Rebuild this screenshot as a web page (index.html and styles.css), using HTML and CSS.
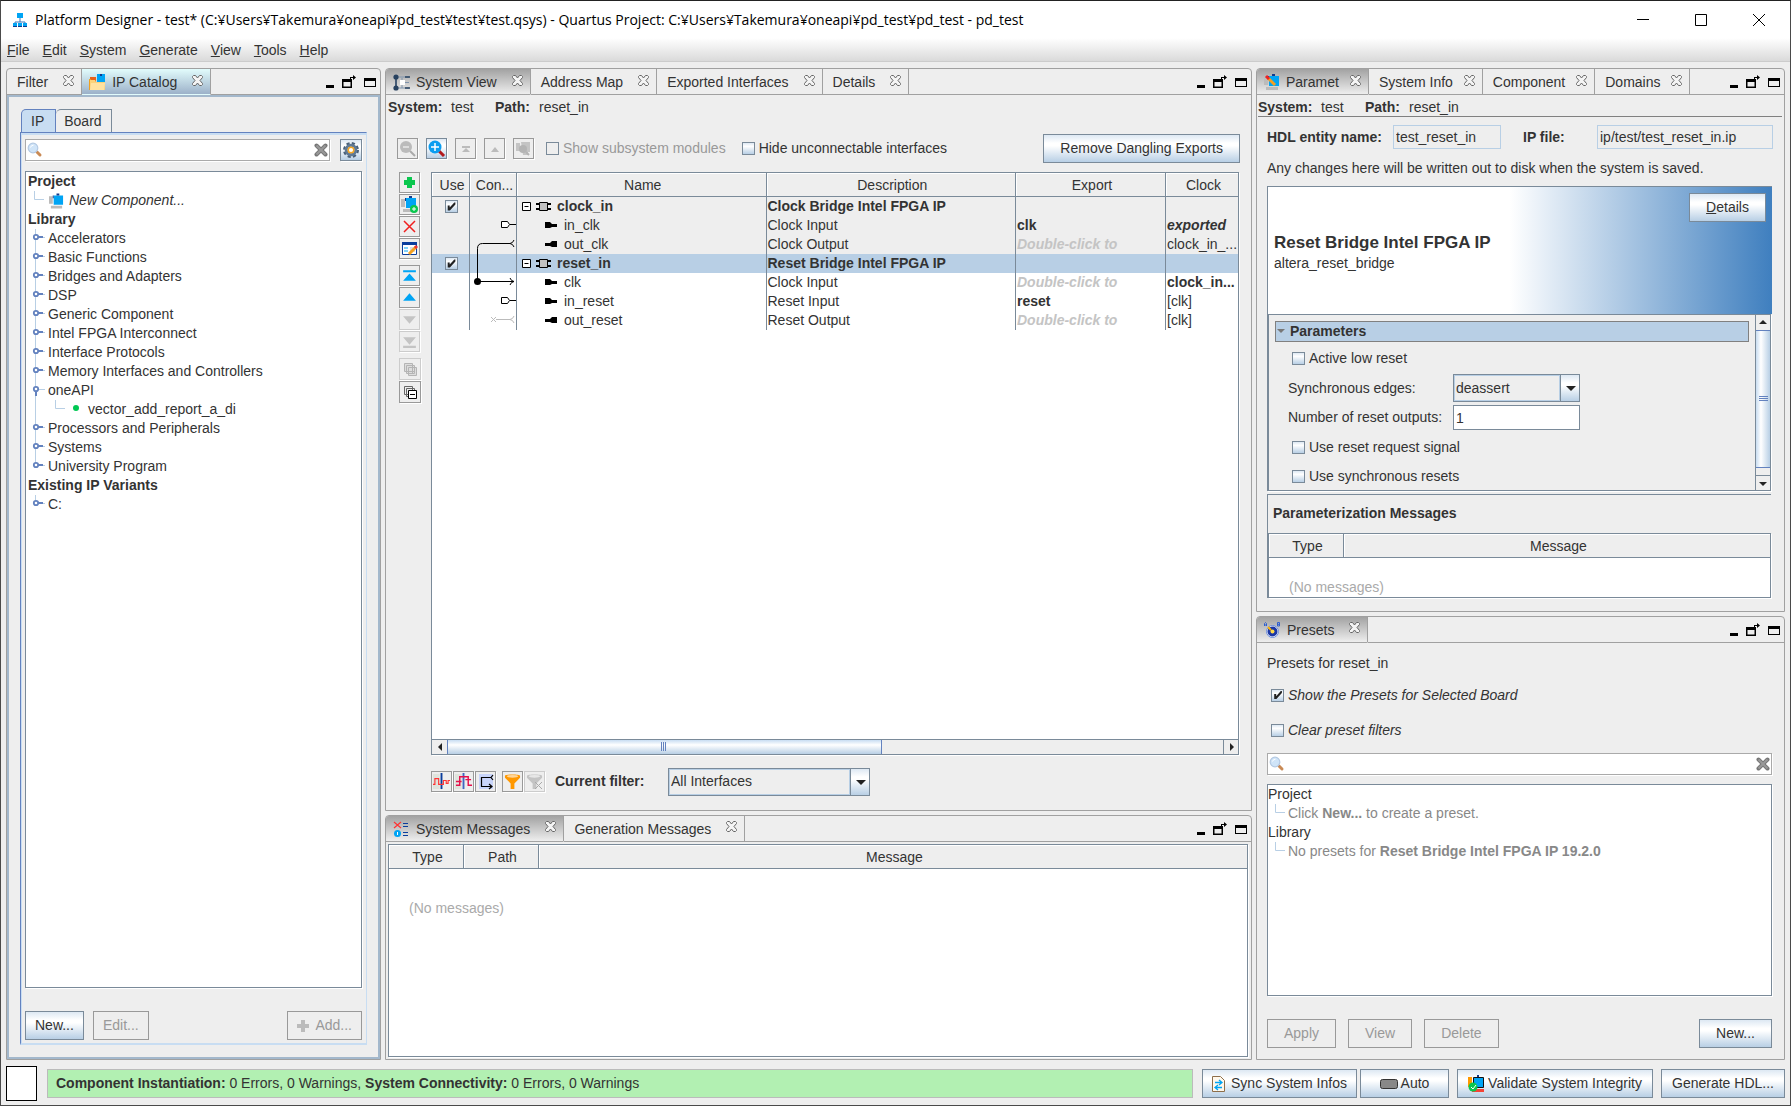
FILE: index.html
```html
<!DOCTYPE html>
<html lang="en">
<head>
  <meta charset="UTF-8" />
  <meta name="viewport" content="width=device-width, initial-scale=1" />
  <title>Platform Designer - test*</title>
  <link rel="stylesheet" href="styles.css">
</head>
<body>

<!-- shared icons -->
<svg class="sprite" aria-hidden="true">
  <symbol id="i-close" viewBox="0 0 11 11">
    <path d="M1.5.5h2l2 2.500 2-2.500h2l1 1v1L8 5.500l2.500 3v1l-1 1h-2l-2-2.500-2 2.500h-2l-1-1v-1L3 5.500l-2.500-3v-1z" fill="#f4f4f4" stroke="#666"/>
  </symbol>
  <symbol id="i-min" viewBox="0 0 8 14"><path d="M0 10h8v3H0z"/></symbol>
  <symbol id="i-float" viewBox="0 0 14 14">
    <path d="M0 4h10v9H0zM1.500 7v4.500h7V7z" fill-rule="evenodd"/>
    <path d="M8 5V2h3V0l3 2.500L11 5V3H9v2z"/>
  </symbol>
  <symbol id="i-max" viewBox="0 0 12 14"><path d="M0 3h12v9H0zM1 6v5h10V6z" fill-rule="evenodd"/></symbol>
  <symbol id="i-search" viewBox="0 0 16 16">
    <path d="M10 10l3 3" stroke="#c98a55" stroke-width="3" stroke-linecap="round"/>
    <circle cx="6" cy="6" r="4.800" fill="#cfe4f8" stroke="#b4c9e2" stroke-width="1.200"/>
    <path d="M3.500 5.500a3 3 0 0 1 3-2.300" stroke="#fff" fill="none"/>
  </symbol>
  <symbol id="i-clear" viewBox="0 0 14 14">
    <path d="M2.500 2.500l9 9M11.500 2.500l-9 9" stroke="#777" stroke-width="4" stroke-linecap="round"/>
    <path d="M2.500 2.500l9 9M11.500 2.500l-9 9" stroke="#999" stroke-width="2"/>
  </symbol>
  <symbol id="i-comp" viewBox="0 0 16 16">
    <path d="M0 3h4v8H0zM2 13h12v3H2z" fill="#bbb"/>
    <path d="M5 2h10v10H5z" fill="#00a4f4"/>
    <path d="M8 0h3v2H8zM4 2h1v3H4z" fill="#123a8c"/>
  </symbol>
  <symbol id="i-knob" viewBox="0 0 14 19">
    <path d="M3.500 0v19M10 8.500h3" stroke="#b8cfe5"/>
    <circle cx="4" cy="8" r="2.200" fill="#fff" stroke="#6382bf" stroke-width="1.800"/>
    <path d="M6 8h5" stroke="#6382bf" stroke-width="2"/>
  </symbol>
  <symbol id="i-knob-last" viewBox="0 0 14 19">
    <path d="M3.500 0v6M10 8.500h3" stroke="#b8cfe5"/>
    <circle cx="4" cy="8" r="2.200" fill="#fff" stroke="#6382bf" stroke-width="1.800"/>
    <path d="M6 8h5" stroke="#6382bf" stroke-width="2"/>
  </symbol>
  <symbol id="i-knob-open" viewBox="0 0 14 19">
    <path d="M3.500 0v19M6 8.500h7" stroke="#b8cfe5"/>
    <circle cx="4" cy="8" r="2.200" fill="#fff" stroke="#6382bf" stroke-width="1.800"/>
    <path d="M4 10v5" stroke="#6382bf" stroke-width="2"/>
  </symbol>
  <symbol id="i-elbow" viewBox="0 0 12 19"><path d="M1.500 0v8.500H11" fill="none" stroke="#b8cfe5"/></symbol>
  <symbol id="i-chip" viewBox="0 0 32 19">
    <path d="M.5 5.500h8v8h-8z" fill="#fff" stroke="#000"/>
    <path d="M2.500 9.500h4" stroke="#000"/>
    <path d="M14 7h15M14 12h15" stroke="#000" stroke-width="2"/>
    <path d="M17.500 5.500h8v8h-8z" fill="#c0c0c0" stroke="#000"/>
  </symbol>
  <symbol id="i-pin-in" viewBox="0 0 12 19"><path d="M0 6h5l2 2h5v3H7l-2 1H0z"/></symbol>
  <symbol id="i-pin-out" viewBox="0 0 12 19"><path d="M12 6H7L5 8H0v3h5l2 1h5z"/></symbol>
  <symbol id="i-hex" viewBox="0 0 47 19">
    <path d="M31.500 5.500h6l2 3-2 3h-6z" fill="#fff" stroke="#000"/>
    <path d="M40 8.500h7" stroke="#000"/>
  </symbol>
  <symbol id="i-wave" viewBox="0 0 18 18">
    <path d="M0 1h7v16H0z" fill="#dfe3dc"/>
    <path d="M9 0v17" stroke="#0a3d9c" stroke-width="2"/>
    <path d="M0 12h2V6h4v6h5V8h3v3h2V8h2" fill="none" stroke="#f33" stroke-width="1.200"/>
  </symbol>
  <symbol id="i-wave2" viewBox="0 0 18 18">
    <path d="M0 1h7v16H0z" fill="#dfe3dc"/>
    <path d="M9 0v17" stroke="#3f66c0" stroke-width="2"/>
    <path d="M1 13h4V4h9v9h4M1 9h6M11 7h6" fill="none" stroke="#e5104c" stroke-width="1.500"/>
  </symbol>
  <symbol id="i-arrow-top" viewBox="0 0 16 16"><path d="M2 3h12v2H2zM8 6l6 7H2z"/></symbol>
  <symbol id="i-arrow-up" viewBox="0 0 16 16"><path d="M8 4l6 7H2z"/></symbol>
  <symbol id="i-arrow-down" viewBox="0 0 16 16"><path d="M8 12L2 5h12z"/></symbol>
  <symbol id="i-arrow-bottom" viewBox="0 0 16 16"><path d="M2 12h12v2H2zM8 11L2 4h12z"/></symbol>
  <symbol id="i-funnel" viewBox="0 0 18 18"><path d="M1 3c0-2 16-2 16 0v2l-6 6v6H7v-6L1 5z"/><ellipse cx="9" cy="3.500" rx="6" ry="1.500" fill="#fff" opacity=".6"/></symbol>
</svg>

<div class="window">
  <header class="titlebar">
    <svg class="app-icon" width="14" height="16" viewBox="0 0 14 16">
      <path d="M7 6v4M2 12v-2h10v2" fill="none" stroke="#3a75b8"/>
      <path d="M4 1h6v5H4z" fill="#00a4f4"/>
      <path d="M0 11h4v4H0zM5 11h4v4H5zM10 11h4v4h-4z" fill="#00a4f4"/>
      <path d="M0 14h4v1H0zM5 14h4v1H5zM10 14h4v1h-4z" fill="#123a8c"/>
    </svg>
    <h1>Platform Designer - test* (C:¥Users¥Takemura¥oneapi¥pd_test¥test¥test.qsys) - Quartus Project: C:¥Users¥Takemura¥oneapi¥pd_test¥pd_test - pd_test</h1>
    <div class="window-buttons">
      <button type="button" aria-label="Minimize"><svg width="14" height="14"><path d="M1 6.500h12" stroke="#000"/></svg></button>
      <button type="button" aria-label="Maximize"><svg width="14" height="14"><path d="M1.500 1.500h11v11h-11z" fill="none" stroke="#000"/></svg></button>
      <button type="button" aria-label="Close"><svg width="14" height="14"><path d="M1 1l12 12M13 1L1 13" stroke="#000"/></svg></button>
    </div>
  </header>

  <nav class="menubar">
    <a href="#"><u>F</u>ile</a>
    <a href="#"><u>E</u>dit</a>
    <a href="#"><u>S</u>ystem</a>
    <a href="#"><u>G</u>enerate</a>
    <a href="#"><u>V</u>iew</a>
    <a href="#"><u>T</u>ools</a>
    <a href="#"><u>H</u>elp</a>
  </nav>

  <main class="workspace">

    <!-- IP Catalog -->
    <section class="panel panel-focus">
      <div class="panel-tabs">
        <div class="tab"><button type="button">Filter</button><button type="button" aria-label="Close Filter"><svg width="11" height="11"><use href="#i-close"/></svg></button></div>
        <div class="tab active with-icon">
          <svg width="17" height="17" viewBox="0 0 17 17">
            <path d="M8 0h8v9H8z" fill="#00a4f4"/><path d="M1 3h6v6H1z" fill="#e8641b"/><path d="M0 5h2v11H0z" fill="#f0a020"/>
            <path d="M1 6h5l1 2h9v8H1z" fill="#fbd27a"/><path d="M2 9h14l-1 7H1z" fill="#ffe2a0"/><path d="M11 0h2v2h-2z" fill="#123a8c"/>
          </svg>
          <button type="button">IP Catalog</button><button type="button" aria-label="Close IP Catalog"><svg width="11" height="11"><use href="#i-close"/></svg></button>
        </div>
        <div class="panel-buttons">
          <button type="button" aria-label="Minimize"><svg width="8" height="14"><use href="#i-min"/></svg></button>
          <button type="button" aria-label="Float"><svg width="14" height="14"><use href="#i-float"/></svg></button>
          <button type="button" aria-label="Maximize"><svg width="12" height="14"><use href="#i-max"/></svg></button>
        </div>
      </div>
      <div class="panel-body catalog">
        <div class="sub-tabs">
          <button type="button" class="sub-tab active">IP</button>
          <button type="button" class="sub-tab">Board</button>
        </div>
        <div class="sub-pane">
          <div class="search-row">
            <div class="search">
              <svg width="16" height="16"><use href="#i-search"/></svg>
              <input type="text" aria-label="Search IP catalog">
              <button type="button" aria-label="Clear search"><svg width="14" height="14"><use href="#i-clear"/></svg></button>
            </div>
            <button type="button" class="icon-button hot" aria-label="Catalog settings">
              <svg width="18" height="18" viewBox="0 0 18 18">
                <circle cx="9" cy="9" r="6.500" fill="none" stroke="#4a6078" stroke-width="3" stroke-dasharray="3 2.100"/>
                <circle cx="9" cy="9" r="4.800" fill="none" stroke="#5f7a96" stroke-width="3"/>
                <circle cx="9" cy="9" r="2.800" fill="#fff" stroke="#f5a623" stroke-width="1.500"/>
              </svg>
            </button>
          </div>
          <ul class="tree catalog-tree">
            <li><b>Project</b></li>
            <li class="child"><svg width="12" height="19"><use href="#i-elbow"/></svg><svg class="tree-icon" width="15" height="16"><use href="#i-comp"/></svg><i>New Component...</i></li>
            <li><b>Library</b></li>
            <li class="node"><svg width="14" height="19"><use href="#i-knob"/></svg>Accelerators</li>
            <li class="node"><svg width="14" height="19"><use href="#i-knob"/></svg>Basic Functions</li>
            <li class="node"><svg width="14" height="19"><use href="#i-knob"/></svg>Bridges and Adapters</li>
            <li class="node"><svg width="14" height="19"><use href="#i-knob"/></svg>DSP</li>
            <li class="node"><svg width="14" height="19"><use href="#i-knob"/></svg>Generic Component</li>
            <li class="node"><svg width="14" height="19"><use href="#i-knob"/></svg>Intel FPGA Interconnect</li>
            <li class="node"><svg width="14" height="19"><use href="#i-knob"/></svg>Interface Protocols</li>
            <li class="node"><svg width="14" height="19"><use href="#i-knob"/></svg>Memory Interfaces and Controllers</li>
            <li class="node"><svg width="14" height="19"><use href="#i-knob-open"/></svg>oneAPI</li>
            <li class="node">
              <svg width="54" height="19"><path d="M3.500 0v19M23.500 0v8.500H33" fill="none" stroke="#b8cfe5"/><circle cx="44" cy="8" r="3" fill="#00c853"/></svg>vector_add_report_a_di
            </li>
            <li class="node"><svg width="14" height="19"><use href="#i-knob"/></svg>Processors and Peripherals</li>
            <li class="node"><svg width="14" height="19"><use href="#i-knob"/></svg>Systems</li>
            <li class="node"><svg width="14" height="19"><use href="#i-knob-last"/></svg>University Program</li>
            <li><b>Existing IP Variants</b></li>
            <li class="node"><svg width="14" height="19"><use href="#i-knob-last"/></svg>C:</li>
          </ul>
          <div class="button-row">
            <button type="button" class="btn">New...</button>
            <button type="button" class="btn" disabled>Edit...</button>
            <button type="button" class="btn push" disabled><svg width="12" height="12"><path d="M4 0h4v4h4v4H8v4H4V8H0V4h4z" fill="#bbb"/></svg>Add...</button>
          </div>
        </div>
      </div>
    </section>

    <div class="stack middle">
      <!-- System View -->
      <section class="panel">
        <div class="panel-tabs">
          <div class="tab active with-icon">
            <svg width="17" height="17" viewBox="0 0 17 17">
              <path d="M3 3v11M3 3h13M3 14h13M9 4v10M9 8.500h7" fill="none" stroke="#7f93ab"/>
              <path d="M12 3h5M12 14h5M3 3v11" stroke="#27415f" stroke-width="1.500"/>
              <circle cx="3" cy="3" r="2.600" fill="#27415f"/><circle cx="3" cy="14" r="2.600" fill="#27415f"/><path d="M7 6h5v5H7z" fill="#fff"/>
            </svg>
            <button type="button">System View</button><button type="button" aria-label="Close System View"><svg width="11" height="11"><use href="#i-close"/></svg></button>
          </div>
          <div class="tab"><button type="button">Address Map</button><button type="button" aria-label="Close Address Map"><svg width="11" height="11"><use href="#i-close"/></svg></button></div>
          <div class="tab"><button type="button">Exported Interfaces</button><button type="button" aria-label="Close Exported Interfaces"><svg width="11" height="11"><use href="#i-close"/></svg></button></div>
          <div class="tab"><button type="button">Details</button><button type="button" aria-label="Close Details"><svg width="11" height="11"><use href="#i-close"/></svg></button></div>
          <div class="panel-buttons">
            <button type="button" aria-label="Minimize"><svg width="8" height="14"><use href="#i-min"/></svg></button>
            <button type="button" aria-label="Float"><svg width="14" height="14"><use href="#i-float"/></svg></button>
            <button type="button" aria-label="Maximize"><svg width="12" height="14"><use href="#i-max"/></svg></button>
          </div>
        </div>
        <div class="panel-body">
          <p class="path-line"><b>System:</b><span>test</span><b>Path:</b><span>reset_in</span></p>
          <div class="toolbar">
            <button type="button" class="icon-button" aria-label="Zoom out" disabled><svg width="18" height="18"><path d="M11 11l5 5" stroke="#aaa" stroke-width="2"/><circle cx="7" cy="7" r="6" fill="#bbb"/><path d="M4 7h6" stroke="#ddd" stroke-width="2"/></svg></button>
            <button type="button" class="icon-button hot" aria-label="Zoom in"><svg width="18" height="18"><path d="M11 11l5 5" stroke="#b3191c" stroke-width="3"/><circle cx="7" cy="7" r="6.500" fill="#0a9df0"/><path d="M3 7h8M7 3v8" stroke="#fff" stroke-width="1.500"/></svg></button>
            <button type="button" class="icon-button" aria-label="Top level" disabled><svg width="18" height="18"><path d="M5 6h8v2H5zM9 8l4 4H5z" fill="#bbb"/></svg></button>
            <button type="button" class="icon-button" aria-label="Up one level" disabled><svg width="18" height="18"><path d="M9 7l4 5H5z" fill="#bbb"/></svg></button>
            <button type="button" class="icon-button" aria-label="Drill into" disabled><svg width="18" height="18"><path d="M1 3h4v8H1zM6 2h9v10h-2v3H8z" fill="#c4c4c4"/><circle cx="8" cy="9" r="4" fill="#b4b4b4"/><path d="M11 12l3 3" stroke="#b4b4b4" stroke-width="2"/></svg></button>
            <label class="check dim"><input type="checkbox" disabled>Show subsystem modules</label>
            <label class="check"><input type="checkbox">Hide unconnectable interfaces</label>
            <button type="button" class="btn push">Remove Dangling Exports</button>
          </div>
          <div class="system-area">
            <div class="side-tools">
              <button type="button" class="icon-button" aria-label="Add"><svg width="17" height="17"><path d="M6 3h5v3h3v5h-3v3H6v-3H3V6h3z" fill="#0ac74e"/></svg></button>
              <button type="button" class="icon-button" aria-label="Add component"><svg width="17" height="17"><use href="#i-comp" width="16" height="16"/><circle cx="13" cy="13" r="4" fill="#0ac74e"/><path d="M11 13h4M13 11v4" stroke="#fff"/></svg></button>
              <button type="button" class="icon-button" aria-label="Remove"><svg width="17" height="17"><path d="M3 3l11 11M14 3L3 14" stroke="#f02020" stroke-width="1.500"/></svg></button>
              <button type="button" class="icon-button" aria-label="Edit"><svg width="17" height="17"><path d="M1.500 2.500h14v12h-14z" fill="#fff" stroke="#0a3d9c"/><path d="M1 2h15v3H1z" fill="#0a3d9c"/><path d="M3 8h4M3 11h4" stroke="#00a4f4"/><path d="M9 7h5v5H9z" fill="#ddd"/><path d="M8 14l7-7" stroke="#f5a020" stroke-width="3"/><path d="M14 8l2-2" stroke="#e33" stroke-width="3"/></svg></button>
              <button type="button" class="icon-button first" aria-label="Move to top"><svg width="17" height="17" fill="#00a4f4"><use href="#i-arrow-top"/></svg></button>
              <button type="button" class="icon-button" aria-label="Move up"><svg width="17" height="17" fill="#00a4f4"><use href="#i-arrow-up"/></svg></button>
              <button type="button" class="icon-button" aria-label="Move down" disabled><svg width="17" height="17" fill="#c4c4c4"><use href="#i-arrow-down"/></svg></button>
              <button type="button" class="icon-button" aria-label="Move to bottom" disabled><svg width="17" height="17" fill="#c4c4c4"><use href="#i-arrow-bottom"/></svg></button>
              <button type="button" class="icon-button large first" aria-label="Expand all" disabled><svg width="17" height="17" fill="#ddd" stroke="#b4b4b4"><path d="M2.500 2.500h8v8h-8zM4.500 4.500h8v8h-8zM6.500 6.500h8v8h-8zM8 10.500h5M10.500 8v5"/></svg></button>
              <button type="button" class="icon-button large" aria-label="Collapse all"><svg width="17" height="17" fill="#eee" stroke="#666"><path d="M2.500 2.500h8v8h-8zM4.500 4.500h8v8h-8z"/><path d="M6.500 6.500h8v8h-8zM8 10.500h5" fill="#fff" stroke="#000"/></svg></button>
            </div>
            <div class="table-frame">
              <table class="grid-table system-table">
                <colgroup><col class="c-use"><col class="c-con"><col class="c-name"><col class="c-desc"><col class="c-exp"><col class="c-clk"></colgroup>
                <thead>
                  <tr><th>Use</th><th>Con...</th><th>Name</th><th>Description</th><th>Export</th><th>Clock</th></tr>
                </thead>
                <tbody>
                  <tr class="shade strong">
                    <td><input type="checkbox" aria-label="Use clock_in" checked></td>
                    <td></td>
                    <td class="module"><svg width="32" height="19"><use href="#i-chip"/></svg>clock_in</td>
                    <td>Clock Bridge Intel FPGA IP</td><td></td><td></td>
                  </tr>
                  <tr class="shade">
                    <td></td>
                    <td><svg width="47" height="19"><use href="#i-hex"/></svg></td>
                    <td class="port"><svg width="12" height="19"><use href="#i-pin-in"/></svg>in_clk</td>
                    <td>Clock Input</td><td><b>clk</b></td><td><b><i>exported</i></b></td>
                  </tr>
                  <tr class="shade">
                    <td></td>
                    <td><svg width="47" height="19" fill="none" stroke="#000"><path d="M7.500 19v-5.500q0-5 5-5H40M44 5q-1 3-4 3.500 3 .5 4 3.500"/></svg></td>
                    <td class="port"><svg width="12" height="19"><use href="#i-pin-out"/></svg>out_clk</td>
                    <td>Clock Output</td><td class="hint">Double-click to</td><td>clock_in_...</td>
                  </tr>
                  <tr class="selected strong">
                    <td><input type="checkbox" aria-label="Use reset_in" checked></td>
                    <td><svg width="47" height="19"><path d="M7.500 0v19" stroke="#000"/></svg></td>
                    <td class="module"><svg width="32" height="19"><use href="#i-chip"/></svg>reset_in</td>
                    <td>Reset Bridge Intel FPGA IP</td><td></td><td></td>
                  </tr>
                  <tr>
                    <td></td>
                    <td><svg width="47" height="19"><path d="M7.500 0v8.500H44M40 5q1 3 4 3.500-3 .5-4 3.500" fill="none" stroke="#000"/><circle cx="7.500" cy="8.500" r="3.500"/></svg></td>
                    <td class="port"><svg width="12" height="19"><use href="#i-pin-in"/></svg>clk</td>
                    <td>Clock Input</td><td class="hint">Double-click to</td><td><b>clock_in...</b></td>
                  </tr>
                  <tr>
                    <td></td>
                    <td><svg width="47" height="19"><use href="#i-hex"/></svg></td>
                    <td class="port"><svg width="12" height="19"><use href="#i-pin-in"/></svg>in_reset</td>
                    <td>Reset Input</td><td><b>reset</b></td><td>[clk]</td>
                  </tr>
                  <tr>
                    <td></td>
                    <td><svg width="47" height="19" fill="none" stroke="#bbb"><path d="M21 6l5 5M26 6l-5 5M26 8.500h14M44 5q-1 3-4 3.500 3 .5 4 3.500"/></svg></td>
                    <td class="port"><svg width="12" height="19"><use href="#i-pin-out"/></svg>out_reset</td>
                    <td>Reset Output</td><td class="hint">Double-click to</td><td>[clk]</td>
                  </tr>
                </tbody>
              </table>
              <div class="scrollbar horizontal">
                <svg class="arrow" width="15" height="14"><path d="M10 3v8L6 7z" fill="#222"/></svg>
                <div class="track"><div class="thumb"><svg width="6" height="9"><path d="M.5 0v9M2.500 0v9M4.500 0v9" stroke="#6382bf"/></svg></div></div>
                <svg class="arrow" width="15" height="14"><path d="M6 3v8l4-4z" fill="#222"/></svg>
              </div>
            </div>
          </div>
          <div class="filter-bar">
            <div class="filter-tools">
              <button type="button" class="icon-button" aria-label="Show clock domains"><svg width="17" height="17"><use href="#i-wave"/></svg></button>
              <button type="button" class="icon-button" aria-label="Show reset domains"><svg width="17" height="17"><use href="#i-wave2"/></svg></button>
              <button type="button" class="icon-button" aria-label="Show connections"><svg width="17" height="17"><path d="M2 1h14v15H2z" fill="#c8d4fa"/><path d="M14 4.500H4.500v9H15M16 2l-2 2.500L16 7M12 11l3 2.500-3 2.500" fill="none" stroke="#000" stroke-width="1.200"/></svg></button>
              <button type="button" class="icon-button gap" aria-label="Filters"><svg width="17" height="17" fill="#ff9800"><use href="#i-funnel"/></svg></button>
              <button type="button" class="icon-button" aria-label="Clear filters" disabled><svg width="17" height="17" fill="#c4c4c4"><use href="#i-funnel"/><path d="M9 9l7 7M16 9l-7 7" stroke="#aaa"/></svg></button>
            </div>
            <label for="currentFilter"><b>Current filter:</b></label>
            <div class="combo wide">
              <select id="currentFilter"><option>All Interfaces</option></select>
              <svg width="19" height="26"><path d="M5 11h10l-5 5z" fill="#222"/></svg>
            </div>
          </div>
        </div>
      </section>

      <!-- Messages -->
      <section class="panel">
        <div class="panel-tabs">
          <div class="tab active with-icon">
            <svg width="17" height="17" viewBox="0 0 17 17"><path d="M1 1l7 6M8 1L1 7" stroke="#f33" stroke-width="1.200"/><path d="M10 2.500h5M10 5.500h5M10 11.500h5M10 14.500h5" stroke="#0a3d9c"/><circle cx="4.500" cy="12.500" r="3.500" fill="#00a4f4"/><path d="M4.500 11v3" stroke="#fff"/></svg>
            <button type="button">System Messages</button><button type="button" aria-label="Close System Messages"><svg width="11" height="11"><use href="#i-close"/></svg></button>
          </div>
          <div class="tab"><button type="button">Generation Messages</button><button type="button" aria-label="Close Generation Messages"><svg width="11" height="11"><use href="#i-close"/></svg></button></div>
          <div class="panel-buttons">
            <button type="button" aria-label="Minimize"><svg width="8" height="14"><use href="#i-min"/></svg></button>
            <button type="button" aria-label="Float"><svg width="14" height="14"><use href="#i-float"/></svg></button>
            <button type="button" aria-label="Maximize"><svg width="12" height="14"><use href="#i-max"/></svg></button>
          </div>
        </div>
        <div class="panel-body messages-body">
          <div class="table-frame">
            <table class="grid-table">
              <colgroup><col class="c-type"><col class="c-path"><col></colgroup>
              <thead><tr><th>Type</th><th>Path</th><th>Message</th></tr></thead>
              <tbody><tr><td colspan="3" class="empty tall">(No messages)</td></tr></tbody>
            </table>
          </div>
        </div>
      </section>
    </div>

    <div class="stack right">
      <!-- Parameters -->
      <section class="panel">
        <div class="panel-tabs tight">
          <div class="tab active with-icon">
            <svg width="17" height="17" viewBox="0 0 17 17"><use href="#i-comp" width="16" height="16"/><path d="M4 4l7 7" stroke="#f5a020" stroke-width="3"/><path d="M2 2l3 3" stroke="#e22" stroke-width="3"/></svg>
            <button type="button">Paramet</button><button type="button" aria-label="Close Parameters"><svg width="11" height="11"><use href="#i-close"/></svg></button>
          </div>
          <div class="tab"><button type="button">System Info</button><button type="button" aria-label="Close System Info"><svg width="11" height="11"><use href="#i-close"/></svg></button></div>
          <div class="tab"><button type="button">Component</button><button type="button" aria-label="Close Component"><svg width="11" height="11"><use href="#i-close"/></svg></button></div>
          <div class="tab"><button type="button">Domains</button><button type="button" aria-label="Close Domains"><svg width="11" height="11"><use href="#i-close"/></svg></button></div>
          <div class="panel-buttons">
            <button type="button" aria-label="Minimize"><svg width="8" height="14"><use href="#i-min"/></svg></button>
            <button type="button" aria-label="Float"><svg width="14" height="14"><use href="#i-float"/></svg></button>
            <button type="button" aria-label="Maximize"><svg width="12" height="14"><use href="#i-max"/></svg></button>
          </div>
        </div>
        <div class="panel-body">
          <p class="path-line ruled"><b>System:</b><span>test</span><b>Path:</b><span>reset_in</span></p>
          <div class="entity-row">
            <label for="hdlName"><b>HDL entity name:</b></label>
            <input type="text" id="hdlName" value="test_reset_in" readonly>
            <label for="ipFile"><b>IP file:</b></label>
            <input type="text" id="ipFile" value="ip/test/test_reset_in.ip" readonly>
          </div>
          <p class="note">Any changes here will be written out to disk when the system is saved.</p>
          <div class="banner">
            <button type="button" class="btn"><span><u>D</u>etails</span></button>
            <h2>Reset Bridge Intel FPGA IP</h2>
            <p>altera_reset_bridge</p>
          </div>
          <div class="param-scroll">
            <div class="params">
              <h3><svg width="8" height="5"><path d="M0 0h8L4 4z" fill="#777"/></svg>Parameters</h3>
              <label class="check"><input type="checkbox">Active low reset</label>
              <div class="field">
                <label for="syncEdges">Synchronous edges:</label>
                <div class="combo">
                  <select id="syncEdges"><option>deassert</option></select>
                  <svg width="19" height="26"><path d="M5 11h10l-5 5z" fill="#222"/></svg>
                </div>
              </div>
              <div class="field">
                <label for="resetOutputs">Number of reset outputs:</label>
                <input type="text" id="resetOutputs" value="1">
              </div>
              <label class="check"><input type="checkbox">Use reset request signal</label>
              <label class="check"><input type="checkbox">Use synchronous resets</label>
            </div>
            <div class="scrollbar vertical">
              <svg class="arrow" width="14" height="15"><path d="M3 9h8L7 5z" fill="#222"/></svg>
              <div class="track"><div class="thumb"><svg width="9" height="6"><path d="M0 .5h9M0 2.500h9M0 4.500h9" stroke="#6382bf"/></svg></div></div>
              <svg class="arrow" width="14" height="15"><path d="M3 6h8l-4 4z" fill="#222"/></svg>
            </div>
          </div>
          <div class="param-messages">
            <h3>Parameterization Messages</h3>
            <div class="table-frame">
              <table class="grid-table">
                <colgroup><col class="c-type"><col></colgroup>
                <thead><tr><th>Type</th><th>Message</th></tr></thead>
                <tbody><tr><td colspan="2" class="empty">(No messages)</td></tr></tbody>
              </table>
            </div>
          </div>
        </div>
      </section>

      <!-- Presets -->
      <section class="panel">
        <div class="panel-tabs">
          <div class="tab active with-icon">
            <svg width="17" height="17" viewBox="0 0 17 17"><path d="M.5 4V1.500l1-1 1 1V4M.5 3h2M13.500.5v3.500h2v-3.500zM13.500 2.300h2" fill="none" stroke="#2f5fd0"/><circle cx="8.500" cy="9.500" r="6" fill="#fff" stroke="#6d8fdc"/><circle cx="8.500" cy="9.500" r="5" fill="#1b37a5"/><circle cx="8.500" cy="9.500" r="2" fill="#ffd94a"/><path d="M4 5l3 3" stroke="#ffb300" stroke-width="2"/></svg>
            <button type="button">Presets</button><button type="button" aria-label="Close Presets"><svg width="11" height="11"><use href="#i-close"/></svg></button>
          </div>
          <div class="panel-buttons">
            <button type="button" aria-label="Minimize"><svg width="8" height="14"><use href="#i-min"/></svg></button>
            <button type="button" aria-label="Float"><svg width="14" height="14"><use href="#i-float"/></svg></button>
            <button type="button" aria-label="Maximize"><svg width="12" height="14"><use href="#i-max"/></svg></button>
          </div>
        </div>
        <div class="panel-body presets">
          <p>Presets for reset_in</p>
          <label class="check"><input type="checkbox" checked><i>Show the Presets for Selected Board</i></label>
          <label class="check"><input type="checkbox"><i>Clear preset filters</i></label>
          <div class="search">
            <svg width="16" height="16"><use href="#i-search"/></svg>
            <input type="text" aria-label="Search presets">
            <button type="button" aria-label="Clear search"><svg width="14" height="14"><use href="#i-clear"/></svg></button>
          </div>
          <ul class="tree">
            <li>Project</li>
            <li class="node muted"><svg width="12" height="19"><use href="#i-elbow"/></svg><span>Click <b>New...</b> to create a preset.</span></li>
            <li>Library</li>
            <li class="node muted"><svg width="12" height="19"><use href="#i-elbow"/></svg><span>No presets for <b>Reset Bridge Intel FPGA IP 19.2.0</b></span></li>
          </ul>
          <div class="button-row">
            <button type="button" class="btn" disabled>Apply</button>
            <button type="button" class="btn" disabled>View</button>
            <button type="button" class="btn" disabled>Delete</button>
            <button type="button" class="btn push">New...</button>
          </div>
        </div>
      </section>
    </div>
  </main>

  <footer class="statusbar">
    <div class="status-box"></div>
    <p class="status-text"><b>Component Instantiation:</b> 0 Errors, 0 Warnings, <b>System Connectivity:</b> 0 Errors, 0 Warnings</p>
    <button type="button" class="btn sync">
      <svg width="13" height="16"><path d="M.5.500h8l4 4v11H.5z" fill="#fff8ec" stroke="#8d6e4a"/><path d="M3 6.500h6M7 4l3 2.500L7 9M10 11.500H4M6 9l-3 2.500L6 14" fill="none" stroke="#00a4f4" stroke-width="1.300"/></svg>
      Sync System Infos
    </button>
    <button type="button" class="btn auto"><svg width="18" height="10"><rect x=".5" y=".5" width="17" height="9" rx="2" fill="#888" stroke="#333"/></svg>Auto</button>
    <button type="button" class="btn validate">
      <svg width="17" height="17"><path d="M0 2h4v10H0z" fill="#f90"/><path d="M4 14h12v3H4z" fill="#f44336"/><path d="M5.500 2.500h10v10h-10z" fill="#00a4f4" stroke="#111"/><path d="M9 0h2v2H9z" fill="#123a8c"/><circle cx="5" cy="12" r="4.500" fill="#0ac74e"/><path d="M3 12l2 2 3-4" fill="none" stroke="#fff"/></svg>
      Validate System Integrity
    </button>
    <button type="button" class="btn generate">Generate HDL...</button>
  </footer>
</div>

</body>
</html>
```

FILE: styles.css
```css
* {
  box-sizing: border-box;
}

body {
  margin: 0;
  background-color: #eee;
  font-family: "Liberation Sans", Arial, sans-serif;
  font-size: 14px;
  line-height: 19px;
  color: #333;
}

h1, h2, h3, p, ul {
  margin: 0;
  padding: 0;
}

button, input, select {
  font: inherit;
  color: inherit;
}

button {
  padding: 0;
  border: none;
  background: none;
}

svg {
  display: block;
  flex-shrink: 0;
}

.sprite {
  display: none;
}

.window {
  display: flex;
  flex-direction: column;
  height: 100vh;
  border: 1px solid #4a4a4a;
  border-top-color: #222;
  overflow: hidden;
}

/* title bar and menu */
.titlebar {
  display: flex;
  align-items: center;
  gap: 8px;
  height: 37px;
  padding-left: 12px;
  background-color: #fff;
}

.titlebar h1 {
  flex: 1;
  font-family: "Open Sans", "Noto Sans", sans-serif;
  font-size: 14px;
  font-weight: 400;
  color: #000;
  white-space: nowrap;
}

.window-buttons {
  display: flex;
  gap: 44px;
  padding-right: 24px;
}

.menubar {
  display: flex;
  gap: 13px;
  height: 24px;
  padding: 3px 6px 1px;
  background: linear-gradient(#fff, #dadada);
  border-bottom: 1px solid #ccc;
}

.menubar a {
  color: #333;
  text-decoration: none;
}

/* panels */
.workspace {
  flex: 1;
  min-height: 0;
  display: grid;
  grid-template-columns: 375fr 867fr 529fr;
  gap: 4px;
  padding: 6px 5px;
}

.stack {
  display: grid;
  gap: 4px;
  min-width: 0;
  min-height: 0;
}

.stack.middle {
  grid-template-rows: 742fr 245fr;
}

.stack.right {
  grid-template-rows: 543fr 444fr;
}

.panel {
  display: flex;
  flex-direction: column;
  min-width: 0;
  min-height: 0;
  border: 1px solid #a0a0a0;
  border-radius: 4px 4px 0 0;
  overflow: hidden;
}

.panel-tabs {
  display: flex;
  height: 26px;
  flex-shrink: 0;
}

.tab {
  display: flex;
  align-items: center;
  gap: 15px;
  padding: 2px 7px 0 10px;
  border-right: 1px solid #a0a0a0;
  border-bottom: 1px solid #a0a0a0;
  white-space: nowrap;
}

.tight .tab {
  gap: 11px;
}

.tab > button:last-child {
  padding-bottom: 5px;
}

.tab.with-icon {
  padding-left: 7px;
}

.tab.with-icon > svg {
  margin-right: -9px;
}

.tight .tab.with-icon > svg {
  margin-right: -6px;
}

.tab.active {
  background: linear-gradient(#a2a2a2, #eee);
  border-bottom-color: transparent;
}

.panel-buttons {
  flex: 1;
  display: flex;
  justify-content: flex-end;
  align-items: center;
  gap: 8px;
  padding: 1px 4px 0 0;
  border-bottom: 1px solid #a0a0a0;
}

.panel-body {
  flex: 1;
  min-height: 0;
  display: flex;
  flex-direction: column;
}

.panel-focus .panel-body {
  border: 2px solid #a3b8cc;
}

.panel-focus .tab.active {
  background: linear-gradient(#e2fcfc, #9cb1c9);
}

/* buttons, checks and fields */
.btn {
  display: flex;
  align-items: center;
  justify-content: center;
  gap: 6px;
  height: 29px;
  padding: 0 9px;
  border: 1px solid #7a8a99;
  background: linear-gradient(#dde8f3, #fff 30%, #fff 40%, #b8cfe5);
  white-space: nowrap;
}

.btn:disabled {
  border-color: #999;
  background: none;
  color: #999;
}

.push {
  margin-left: auto;
}

.icon-button {
  display: flex;
  align-items: center;
  justify-content: center;
  width: 21px;
  height: 21px;
  border: 1px solid #999;
  box-shadow: 1px 1px #fff;
}

.icon-button.large {
  width: 22px;
  height: 22px;
}

.icon-button.hot {
  border-color: #7a8a99;
  background: linear-gradient(#dde8f3, #fff 30%, #fff 40%, #b8cfe5);
}

.side-tools .icon-button:disabled,
.filter-tools .icon-button:disabled {
  border-color: #ccc;
}

.check {
  display: flex;
  align-items: center;
  gap: 4px;
  white-space: nowrap;
}

.dim {
  color: #999;
}

input[type="checkbox"] {
  appearance: none;
  display: block;
  width: 13px;
  height: 13px;
  margin: 0;
  border: 1px solid #7a8a99;
  background: linear-gradient(#dde8f3, #fff 30%, #b8cfe5);
}

input[type="checkbox"]:disabled {
  background: none;
}

input[type="checkbox"]:checked::after {
  content: "";
  display: block;
  height: 11px;
  background-color: #222;
  clip-path: polygon(20% 40%, 38% 40%, 38% 60%, 80% 14%, 90% 14%, 90% 32%, 40% 86%, 20% 86%);
}

input[type="text"] {
  height: 24px;
  min-width: 0;
  padding: 0 2px;
  border: 1px solid #b8cfe5;
  border-radius: 0;
  background: none;
}

.combo {
  display: flex;
  width: 127px;
  height: 28px;
  border: 1px solid #7a8a99;
}

.combo.wide {
  width: 202px;
}

.combo select {
  appearance: none;
  flex: 1;
  min-width: 0;
  padding: 0 1px;
  border: 1px solid #b8cfe5;
  border-radius: 0;
  background: none;
}

.combo svg {
  border-left: 1px solid #7a8a99;
  background: linear-gradient(#dde8f3, #fff 30%, #fff 40%, #b8cfe5);
}

.search {
  display: flex;
  align-items: center;
  height: 22px;
  padding: 0 1px;
  border: 1px solid #aaa;
  background-color: #fff;
  box-shadow: 1px 1px #fff;
}

.search input[type="text"] {
  flex: 1;
  height: 20px;
  border: none;
}

.button-row {
  display: flex;
}

/* trees */
.tree {
  list-style: none;
  flex: 1;
  min-height: 0;
  overflow: hidden;
  border: 1px solid #7a8a99;
  background-color: #fff;
  box-shadow: 1px 1px #fff;
}

.tree li {
  display: flex;
  align-items: center;
  height: 19px;
  white-space: nowrap;
}

.tree .node {
  gap: 2px;
  padding-left: 6px;
}

.tree .child {
  gap: 4px;
  padding-left: 7px;
}

.tree-icon {
  margin-right: 1px;
}

.catalog-tree li {
  padding-left: 2px;
}

.muted {
  color: #888;
}

/* IP catalog */
.panel-body.catalog {
  padding: 12px 11px;
}

.sub-tabs {
  display: flex;
  margin-left: 1px;
}

.sub-tab {
  height: 23px;
  padding: 0 9px 0 8px;
  border: 1px solid #7a8a99;
  border-left: none;
  border-bottom: none;
  border-top-left-radius: 5px;
}

.sub-tab.active {
  padding: 0 11px 0 9px;
  border: 1px solid #6382bf;
  border-bottom: none;
  background-color: #c8ddf2;
}

.sub-pane {
  flex: 1;
  min-height: 0;
  display: flex;
  flex-direction: column;
  padding: 4px 4px 3px;
  border: 1px solid #6382bf;
  border-right-color: #c8ddf2;
  border-bottom: 2px solid #c8ddf2;
  box-shadow: inset 1px 2px #c8ddf2;
}

.search-row {
  display: flex;
  gap: 10px;
  margin: 2px 0 10px;
}

.search-row .search {
  flex: 1;
}

.search-row .icon-button {
  width: 22px;
  height: 22px;
}

.catalog .button-row {
  gap: 9px;
  margin-top: 23px;
}

/* system view */
.path-line {
  display: flex;
  padding: 3px 2px 0;
}

.path-line b:first-child {
  width: 63px;
}

.path-line span {
  width: 44px;
}

.path-line b {
  width: 44px;
}

.path-line span:last-child {
  width: auto;
}

.path-line.ruled {
  height: 22px;
  margin: 0 2px 0 1px;
  padding: 3px 0 0;
  border-bottom: 1px solid #808080;
}

.toolbar {
  display: flex;
  align-items: center;
  gap: 8px;
  margin: 17px 11px 9px 11px;
}

.toolbar .check:nth-of-type(1) {
  margin: 0 8px 0 4px;
}

.toolbar .btn {
  padding: 0 16px;
}

.system-area {
  flex: 1;
  min-height: 0;
  display: flex;
  gap: 11px;
  padding: 0 12px 0 13px;
}

.side-tools {
  display: flex;
  flex-direction: column;
  gap: 1px;
  width: 21px;
}

.side-tools .first {
  margin-top: 5px;
}

.table-frame {
  flex: 1;
  min-width: 0;
  min-height: 0;
  display: flex;
  flex-direction: column;
  border: 1px solid #7a8a99;
  background-color: #fff;
  box-shadow: 1px 1px #fff;
}

.grid-table {
  width: 100%;
  table-layout: fixed;
  border-collapse: separate;
  border-spacing: 0;
}

.grid-table th {
  height: 24px;
  padding: 2px 0 0 3px;
  border-right: 1px solid #7a8a99;
  border-bottom: 1px solid #7a8a99;
  background-color: #eee;
  box-shadow: inset 1px 1px #fff;
  font-weight: 400;
}

.system-table td {
  height: 19px;
  padding: 0 0 0 1px;
  border-right: 1px solid #7a8a99;
  white-space: nowrap;
  overflow: hidden;
}

.grid-table th:last-child,
.system-table td:last-child {
  border-right: none;
}

.system-table td:nth-child(2) {
  padding: 0;
}

.system-table td input {
  margin: 0 auto;
}

.c-use { width: 38px; }
.c-con { width: 47px; }
.c-name { width: 31%; }
.c-desc { width: 31%; }
.c-exp { width: 150px; }
.c-clk { width: 72px; }
.c-type { width: 75px; }
.c-path { width: 75px; }

.shade td {
  background-color: #eee;
}

.selected td {
  background-color: #b8cfe5;
}

.strong td {
  font-weight: 700;
}

.module svg,
.port svg {
  float: left;
}

.module svg {
  margin: 0 3px 0 4px;
}

.port svg {
  margin: 0 7px 0 27px;
}

.hint {
  color: #c4c4c4;
  font-weight: 700;
  font-style: italic;
}

.empty {
  padding: 20px 20px 0;
  color: #aaa;
}

.empty.tall {
  padding-top: 30px;
}

.scrollbar {
  display: flex;
  background-color: #eee;
}

.scrollbar .track {
  flex: 1;
}

.scrollbar .thumb {
  display: flex;
  align-items: center;
  justify-content: center;
}

.scrollbar.horizontal {
  height: 15px;
  margin-top: auto;
  border-top: 1px solid #7a8a99;
}

.horizontal .arrow:last-child {
  border-left: 1px solid #7a8a99;
}

.horizontal .thumb {
  width: 56%;
  height: 14px;
  border: 1px solid #6382bf;
  border-width: 0 1px;
  background: linear-gradient(#c8ddf2, #fff 35%, #b8cfe5);
}

.scrollbar.vertical {
  flex-direction: column;
  width: 15px;
  border-left: 1px solid #7a8a99;
}

.vertical .thumb {
  height: 95%;
  border: 1px solid #6382bf;
  border-width: 1px 0;
  background: linear-gradient(90deg, #c8ddf2, #fff 35%, #b8cfe5);
}

.vertical .arrow:last-child {
  border-top: 1px solid #7a8a99;
}

.filter-bar {
  display: flex;
  align-items: center;
  padding: 13px 0 14px 45px;
}

.filter-tools {
  display: flex;
  gap: 1px;
  margin-right: 10px;
}

.filter-tools .gap {
  margin-left: 5px;
}

.filter-bar label {
  width: 113px;
}

.messages-body {
  padding: 2px 3px 2px 2px;
}

/* parameters */
.entity-row {
  display: flex;
  align-items: center;
  padding: 8px 11px 0 10px;
}

.entity-row label:first-child {
  width: 126px;
}

.entity-row label {
  width: 74px;
}

#hdlName {
  width: 108px;
  margin-right: 22px;
}

#ipFile {
  flex: 1;
}

.note {
  padding: 10px 11px 8px 10px;
}

.banner {
  display: flex;
  flex-direction: column;
  height: 128px;
  margin: 0 12px 0 10px;
  padding: 6px 6px 0;
  border: 1px solid #7a8a99;
  border-right: none;
  border-bottom: none;
  background: linear-gradient(90deg, #fff 48%, #3f7fbf);
}

.banner .btn {
  align-self: flex-end;
  width: 77px;
}

.banner h2 {
  margin-top: 10px;
  font-size: 17px;
  line-height: 22px;
}

.param-scroll {
  display: flex;
  height: 177px;
  margin: 0 13px 0 10px;
  border: 1px solid #7a8a99;
  border-left-width: 2px;
  box-shadow: 1px 1px #fff;
}

.params {
  flex: 1;
  padding: 6px 6px 0;
  overflow: hidden;
}

.params h3 {
  display: flex;
  align-items: center;
  gap: 5px;
  height: 21px;
  padding-left: 1px;
  border: 1px solid #808080;
  background-color: #b8cfe5;
  font-size: 14px;
}

.params .check {
  height: 29px;
  margin-left: 17px;
}

.params h3 + .check {
  height: 32px;
}

.field {
  display: flex;
  align-items: center;
  margin: 0 0 3px 13px;
}

.field label {
  width: 165px;
}

.field + .check {
  margin-top: 3px;
}

.field input[type="text"] {
  width: 127px;
  height: 25px;
  border-color: #7a8a99;
  background-color: #fff;
}

.param-messages {
  flex: 1;
  min-height: 0;
  display: flex;
  flex-direction: column;
  margin: 3px 13px 13px 10px;
  border-top: 1px solid #7a8a99;
  border-left: 1px solid #7a8a99;
}

.param-messages h3 {
  padding: 9px 5px 10px;
  font-size: 14px;
}

/* presets */
.presets {
  padding: 11px 12px 11px 10px;
}

.presets .check {
  margin: 13px 0 0 4px;
}

.presets .check + .check {
  margin-top: 16px;
}

.presets .search {
  flex-shrink: 0;
  margin: 13px 0 9px;
}

.presets .button-row {
  gap: 12px;
  margin-top: 23px;
}

.presets .btn {
  padding: 0 16px;
}

/* status bar */
.statusbar {
  display: flex;
  align-items: center;
  padding: 0 5px 4px;
}

.status-box {
  width: 31px;
  height: 35px;
  margin-right: 10px;
  border: 1px solid #000;
  background-color: #fff;
}

.status-text {
  flex: 1;
  height: 29px;
  padding: 4px 8px;
  border: 1px solid #bbb;
  background-color: #b2f0b2;
  white-space: nowrap;
}

.sync {
  width: 155px;
  margin: 0 3px 0 9px;
}

.auto {
  width: 89px;
  gap: 3px;
}

.validate {
  width: 196px;
  gap: 3px;
  margin: 0 8px;
}

.generate {
  width: 124px;
}
```
